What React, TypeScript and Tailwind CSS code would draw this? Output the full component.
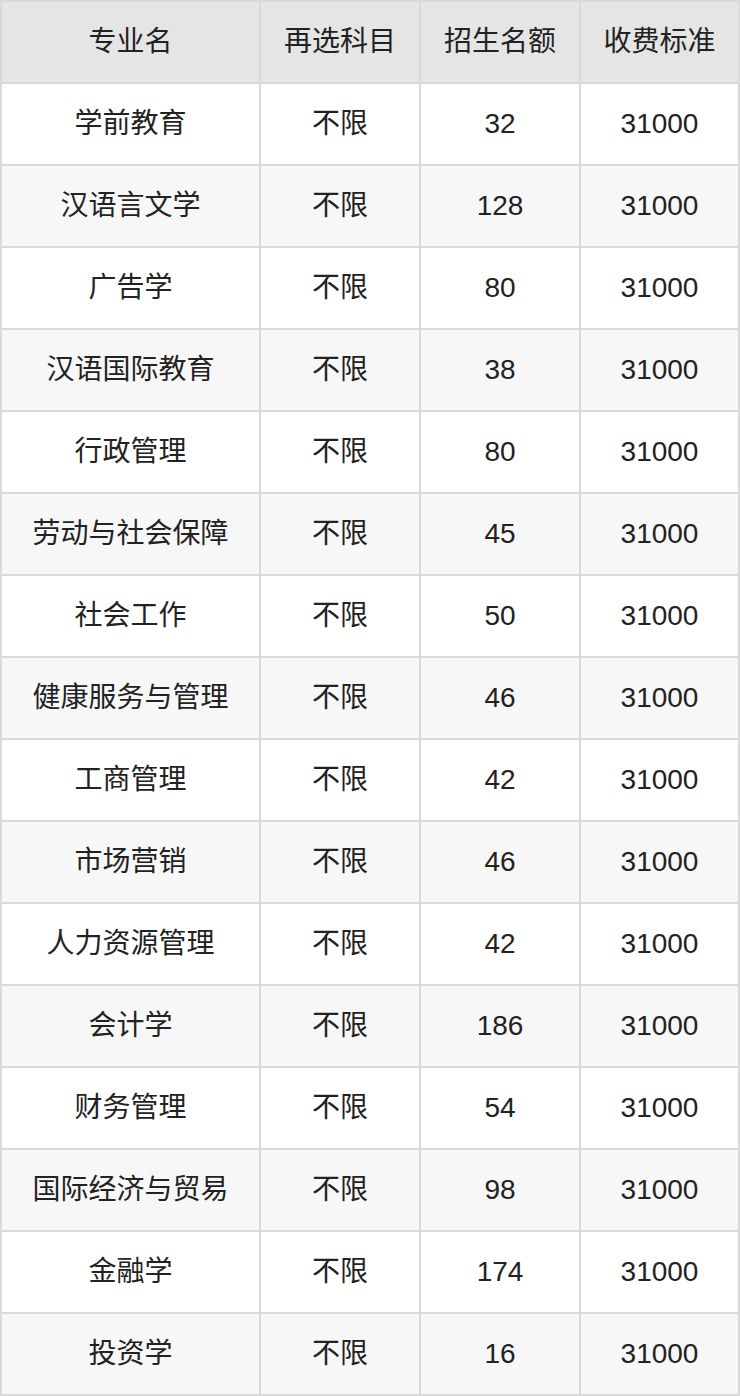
const rows: [string, string, string, string][] = [
  ["学前教育", "不限", "32", "31000"],
  ["汉语言文学", "不限", "128", "31000"],
  ["广告学", "不限", "80", "31000"],
  ["汉语国际教育", "不限", "38", "31000"],
  ["行政管理", "不限", "80", "31000"],
  ["劳动与社会保障", "不限", "45", "31000"],
  ["社会工作", "不限", "50", "31000"],
  ["健康服务与管理", "不限", "46", "31000"],
  ["工商管理", "不限", "42", "31000"],
  ["市场营销", "不限", "46", "31000"],
  ["人力资源管理", "不限", "42", "31000"],
  ["会计学", "不限", "186", "31000"],
  ["财务管理", "不限", "54", "31000"],
  ["国际经济与贸易", "不限", "98", "31000"],
  ["金融学", "不限", "174", "31000"],
  ["投资学", "不限", "16", "31000"],
];

const headers = ["专业名", "再选科目", "招生名额", "收费标准"];

export default function App() {
  return (
    <div className="w-[740px] bg-white font-['Liberation_Sans','Noto_Sans_CJK_SC',sans-serif] text-[28px] text-[#222]">
      <div className="grid grid-cols-[257px_158px_158px_157px] auto-rows-[80px] gap-[2px] p-[2px] bg-[#d9d9d9]">
        {headers.map((h) => (
          <div key={h} className="flex items-center justify-center bg-[#e5e5e5]">
            {h}
          </div>
        ))}
        {rows.map((r, i) =>
          r.map((c, j) => (
            <div
              key={`${i}-${j}`}
              className={`flex items-center justify-center ${i % 2 === 0 ? "bg-white" : "bg-[#f7f7f7]"}`}
            >
              {c}
            </div>
          ))
        )}
      </div>
    </div>
  );
}
